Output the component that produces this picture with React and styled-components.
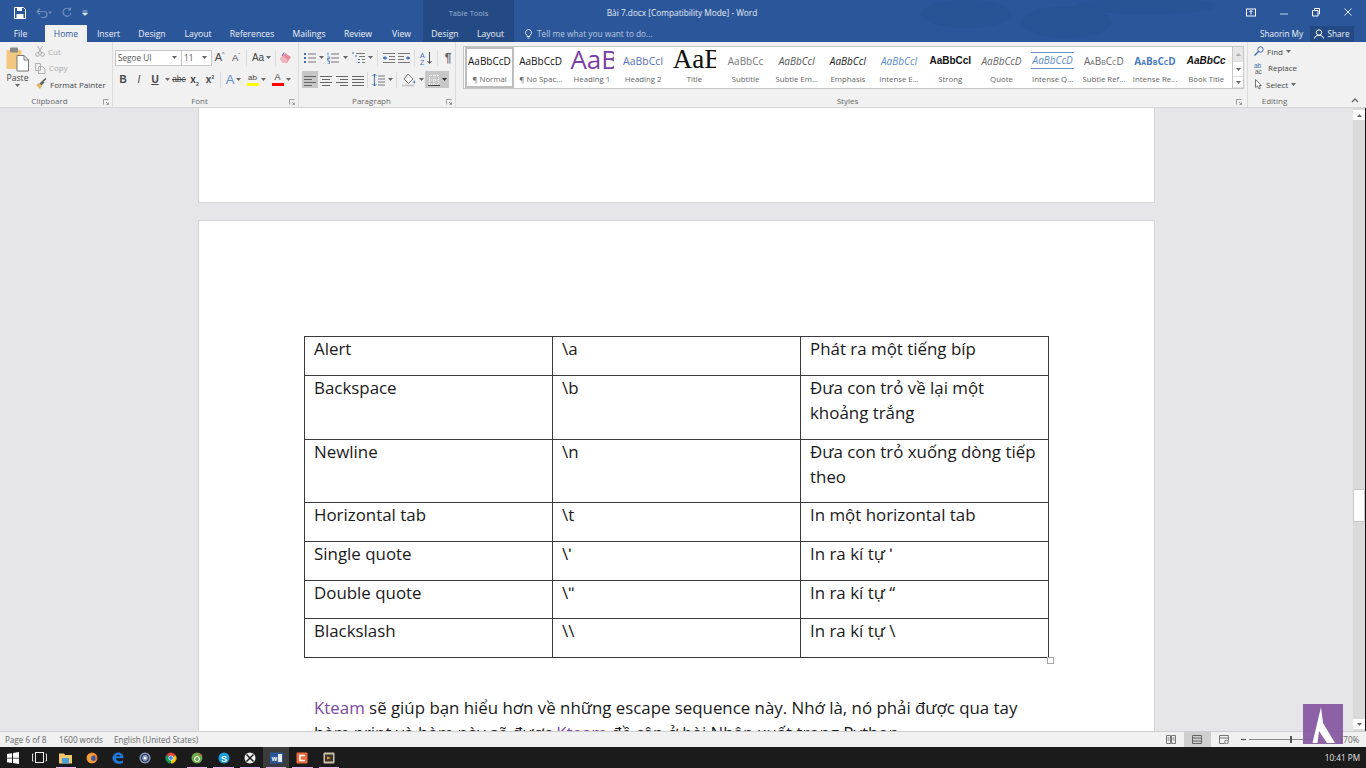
import React from 'react';
import styled, { createGlobalStyle } from 'styled-components';

const GlobalStyle = createGlobalStyle`
  html, body { margin: 0; padding: 0; height: 100%; overflow: hidden; }
  body { font-family: "Open Sans", "Liberation Sans", sans-serif; }
  #root { height: 100%; }
`;

const Screen = styled.div`
  position: relative;
  width: 1366px;
  height: 768px;
  display: flex;
  flex-direction: column;
  overflow: hidden;
  background: #e6e6e8;
`;

/* ---------- title bar and tabs ---------- */

const Header = styled.header`
  position: relative;
  height: 42px;
  background: #2b579a;
  color: #fff;
  flex: none;
`;

const Clouds = styled.svg`
  position: absolute;
  right: 90px;
  top: 0;
  width: 400px;
  height: 42px;
`;

const TitleRow = styled.div`
  position: relative;
  height: 25px;
  display: flex;
  align-items: center;
`;

const Quick = styled.div`
  width: 423px;
  flex: none;
  display: flex;
  align-items: center;
  padding-left: 14px;
  box-sizing: border-box;
  gap: 10px;
`;

const ContextLabel = styled.div`
  width: 91px;
  height: 25px;
  flex: none;
  background: #234a84;
  color: #9fb3d2;
  font-size: 7.5px;
  line-height: 26px;
  text-align: center;
`;

const DocTitle = styled.div`
  width: 336px;
  flex: none;
  font-size: 8.3px;
  text-align: center;
  color: #e6ecf5;
`;

const WindowButtons = styled.div`
  margin-left: auto;
  display: flex;
  align-items: center;
  gap: 24px;
  padding-right: 14px;
`;

const TabRow = styled.div`
  position: relative;
  height: 17px;
  display: flex;
  align-items: stretch;
`;

const Tab = styled.div`
  width: ${(p) => p.$w}px;
  flex: none;
  box-sizing: border-box;
  font-size: 8.6px;
  line-height: 18px;
  text-align: center;
  color: ${(p) => (p.$active ? '#2b579a' : '#eef2f8')};
  background: ${(p) => (p.$active ? '#f1f1f1' : p.$context ? '#234a84' : 'transparent')};
  &:first-child {
    padding-right: 4px;
  }
`;

const TellMe = styled.div`
  display: flex;
  align-items: center;
  gap: 5px;
  margin-left: 11px;
  font-size: 8.3px;
  color: #b9c9e0;
`;

const Account = styled.div`
  margin-left: auto;
  display: flex;
  align-items: center;
  font-size: 8.2px;
  color: #eef2f8;
  padding-right: 12px;
`;

const ShareBtn = styled.div`
  height: 16px;
  width: 44px;
  margin-left: 7px;
  display: flex;
  align-items: center;
  justify-content: center;
  gap: 3px;
  background: #234a84;
`;

/* ---------- ribbon ---------- */

const Ribbon = styled.section`
  position: relative;
  height: 66px;
  flex: none;
  display: flex;
  background: #f1f1f1;
  border-bottom: 1px solid #d6d6d6;
  box-sizing: border-box;
  color: #444;
`;

const Group = styled.div`
  position: relative;
  width: ${(p) => p.$w}px;
  flex: none;
  box-sizing: border-box;
  display: flex;
  flex-direction: column;
  border-right: 1px solid ${(p) => (p.$noline ? 'transparent' : '#dcdcdc')};
`;

const GroupBody = styled.div`
  flex: 1;
  min-height: 0;
`;

const GroupLabel = styled.div`
  height: 13px;
  box-sizing: border-box;
  padding-right: ${(p) => p.$shift || 0}px;
  font-size: 8px;
  line-height: 13px;
  text-align: center;
  color: #666;
`;

const Launcher = styled.svg`
  position: absolute;
  right: ${(p) => p.$right || 3}px;
  bottom: 2px;
  width: 6px;
  height: 6px;
`;

const ClipboardBody = styled(GroupBody)`
  display: flex;
  padding-top: 2px;
`;

const PasteCol = styled.div`
  width: 35px;
  flex: none;
  display: flex;
  flex-direction: column;
  align-items: center;
  padding-top: 2px;
  font-size: 8.6px;
  color: #444;
`;

const ClipList = styled.div`
  display: flex;
  flex-direction: column;
  gap: 0.5px;
  margin-top: -1px;
`;

const ClipItem = styled.div`
  height: 16px;
  display: flex;
  align-items: center;
  gap: 3px;
  font-size: 8px;
  white-space: nowrap;
  color: ${(p) => (p.$off ? '#a8a8a8' : '#444')};
`;

const ToolRows = styled(GroupBody)`
  display: flex;
  flex-direction: column;
  gap: 5px;
  padding: 7px 0 0 ${(p) => p.$left || 0}px;
`;

const ToolRow = styled.div`
  height: 17px;
  display: flex;
  align-items: center;
`;

const Combo = styled.div`
  width: ${(p) => p.$w}px;
  height: 16px;
  box-sizing: border-box;
  flex: none;
  display: flex;
  align-items: center;
  justify-content: space-between;
  padding: 0 4px 0 2px;
  margin-right: -1px;
  background: #fff;
  border: 1px solid #c6c6c6;
  font-size: 8.2px;
  color: #555;
`;

const Tool = styled.div`
  width: ${(p) => p.$w || 16}px;
  height: 17px;
  flex: none;
  display: flex;
  align-items: center;
  justify-content: center;
  gap: 2px;
  background: ${(p) => (p.$on ? '#c6c6c6' : 'transparent')};
  color: #444;
`;

const Letter = styled.span`
  font-family: "Liberation Sans", sans-serif;
  font-size: ${(p) => p.$size || 10}px;
  font-weight: ${(p) => (p.$bold ? 700 : 400)};
  font-style: ${(p) => (p.$italic ? 'italic' : 'normal')};
  text-decoration: ${(p) => p.$deco || 'none'};
  color: ${(p) => p.$color || '#444'};
  line-height: 1;
  white-space: nowrap;
`;

const Sup = styled.sup`
  font-size: 5px;
  line-height: 0;
`;

const Sub = styled.sub`
  font-size: 5px;
  line-height: 0;
`;

const ToolSep = styled.div`
  width: 1px;
  height: 16px;
  flex: none;
  margin: 0 ${(p) => p.$gap || 2}px;
  background: #dcdcdc;
`;

const ColorBar = styled.div`
  display: flex;
  flex-direction: column;
  align-items: center;
  &::after {
    content: '';
    width: 12px;
    height: 3px;
    margin-top: 1px;
    background: ${(p) => p.$color};
  }
`;

const StylesBody = styled(GroupBody)`
  display: flex;
  align-items: flex-start;
  padding: 4px 0 0 7px;
`;

const Gallery = styled.div`
  display: grid;
  grid-template-columns: repeat(15, 51.2px);
  width: 769px;
  height: 43px;
  box-sizing: border-box;
  background: #fff;
  border: 1px solid #c6c6c6;
  border-right: none;
  flex: none;
`;

const StyleItem = styled.div`
  height: 41px;
  box-sizing: border-box;
  display: flex;
  flex-direction: column;
  align-items: center;
  overflow: hidden;
  margin: 0 1px;
  border: ${(p) => (p.$on ? '2px solid #bdbdbd' : '2px solid transparent')};
  padding: 0 1px;
`;

const Preview = styled.div`
  height: 24px;
  width: 100%;
  overflow: hidden;
  white-space: nowrap;
  text-align: center;
  line-height: ${(p) => (p.$size > 20 ? 20 : 24)}px;
  font-family: ${(p) => p.$font || '"Open Sans", sans-serif'};
  font-size: ${(p) => p.$size || 10}px;
  font-weight: ${(p) => (p.$bold ? 700 : 400)};
  font-style: ${(p) => (p.$italic ? 'italic' : 'normal')};
  font-variant: ${(p) => (p.$caps ? 'small-caps' : 'normal')};
  color: ${(p) => p.$color || '#111'};
  box-sizing: border-box;
  ${(p) => p.$rule && 'border-top: 1px solid #6f93c6; border-bottom: 1px solid #6f93c6; height: 17px; line-height: 15px; margin: 3px 0 4px;'}
`;

const StyleName = styled.div`
  font-size: 7.8px;
  line-height: 12px;
  color: #666;
  white-space: nowrap;
`;

const GalleryScroll = styled.div`
  width: 12px;
  height: 43px;
  flex: none;
  display: grid;
  grid-template-rows: 15px 15px 11px;
  border: 1px solid #c6c6c6;
  box-sizing: border-box;
  background: #fff;
`;

const ScrollCell = styled.div`
  display: flex;
  align-items: center;
  justify-content: center;
  background: ${(p) => (p.$off ? '#e6e6e6' : '#fff')};
  border-bottom: 1px solid #e0e0e0;
`;

const EditList = styled(GroupBody)`
  display: flex;
  flex-direction: column;
  gap: 0.5px;
  padding: 1px 0 0 6px;
`;

const Collapse = styled.svg`
  position: absolute;
  right: 7px;
  bottom: 4px;
  width: 8px;
  height: 6px;
`;

/* ---------- document ---------- */

const Workspace = styled.main`
  position: relative;
  flex: 1;
  min-height: 0;
  overflow: hidden;
  background: #e6e6e8;
  padding-left: 198px;
`;

const PrevPage = styled.div`
  width: 957px;
  height: 95px;
  background: #fff;
  border: 1px solid #d4d4d4;
  border-top: none;
  box-sizing: border-box;
`;

const Page = styled.article`
  width: 957px;
  height: 700px;
  margin-top: 17px;
  box-sizing: border-box;
  padding: 115px 0 0 105px;
  background: #fff;
  border: 1px solid #d4d4d4;
`;

const TableWrap = styled.div`
  position: relative;
  width: 745px;
`;

const Table = styled.table`
  width: 745px;
  table-layout: fixed;
  border-collapse: collapse;
  font-size: 16.9px;
  color: #1a1a1a;
`;

const Cell = styled.td`
  height: ${(p) => p.$h}px;
  padding: 0 8px 0 9px;
  box-sizing: border-box;
  vertical-align: top;
  border: 1px solid #3a3a3a;
  line-height: 24.6px;
`;

const ResizeHandle = styled.div`
  position: absolute;
  right: -5px;
  bottom: -6px;
  width: 5px;
  height: 5px;
  background: #fff;
  border: 1px solid #a8a8a8;
`;

const Para = styled.p`
  width: 720px;
  margin: 37px 0 0 10px;
  font-size: 16.85px;
  line-height: 25px;
  color: #1a1a1a;
`;

const Link = styled.span`
  color: #7a4a9e;
`;

const Scrollbar = styled.div`
  position: absolute;
  top: 0;
  bottom: 0;
  right: 0;
  width: 13px;
  background: #dadada;
  border-right: 1px solid #111;
  box-sizing: border-box;
  display: flex;
  flex-direction: column;
  align-items: stretch;
`;

const ScrollArrow = styled.div`
  height: 10px;
  margin: ${(p) => p.$top || 0}px 0 ${(p) => p.$bottom || 0}px;
  flex: none;
  background: #fff;
  display: flex;
  align-items: center;
  justify-content: center;
`;

const ScrollThumb = styled.div`
  height: 33px;
  margin-top: 369px;
  flex: none;
  background: #fff;
  border: 1px solid #c8c8c8;
  box-sizing: border-box;
`;

const Spring = styled.div`
  flex: 1;
`;

/* ---------- status bar ---------- */

const StatusBar = styled.footer`
  height: 16px;
  flex: none;
  display: flex;
  align-items: center;
  box-sizing: border-box;
  background: #f1f1f1;
  border-top: 1px solid #cfcfcf;
  font-size: 8.1px;
  color: #666;
  padding-left: 5px;
`;

const StatusItem = styled.span`
  width: ${(p) => p.$w}px;
  flex: none;
  white-space: nowrap;
  margin-top: -1px;
`;

const StatusRight = styled.div`
  margin-left: auto;
  display: flex;
  align-items: center;
  height: 100%;
  padding-right: 3px;
`;

const ViewBtn = styled.div`
  width: 26.5px;
  height: 100%;
  display: flex;
  align-items: center;
  justify-content: center;
  background: ${(p) => (p.$on ? '#cfcfcf' : 'transparent')};
`;

const ZoomOut = styled.div`
  margin-left: 4px;
`;

const ZoomSlider = styled.div`
  position: relative;
  width: 71px;
  height: 1px;
  margin: 0 4px 0 3px;
  background: #8a8a8a;
`;

const ZoomThumb = styled.div`
  position: absolute;
  left: 41px;
  top: -3px;
  width: 2px;
  height: 7px;
  background: #555;
`;

const ZoomPct = styled.span`
  width: 28px;
  margin-left: 6px;
  text-align: center;
  margin-top: -1px;
`;

const Watermark = styled.svg`
  position: absolute;
  left: 1303px;
  top: 704px;
  width: 40px;
  height: 40px;
`;

/* ---------- taskbar ---------- */

const Taskbar = styled.nav`
  height: 21px;
  flex: none;
  display: flex;
  align-items: stretch;
  background: #1b1b1b;
`;

const TaskBtn = styled.div`
  position: relative;
  width: 26.3px;
  flex: none;
  display: flex;
  align-items: center;
  justify-content: center;
  background: ${(p) => (p.$active ? '#3c3c3c' : 'transparent')};
  &::after {
    content: '';
    display: ${(p) => (p.$running ? 'block' : 'none')};
    position: absolute;
    left: 3px;
    right: 3px;
    bottom: 0;
    height: 1.5px;
    background: #eab2f0;
  }
`;

const Clock = styled.div`
  margin-left: auto;
  padding-right: 6px;
  font-size: 8.2px;
  line-height: 21px;
  color: #e4e4e4;
`;

/* ---------- icons ---------- */

const Ic = ({ w = 14, h = 14, vb, children }) => (
  <svg width={w} height={h} viewBox={vb || `0 0 ${w} ${h}`} style={{ display: 'block', flex: 'none' }}>
    {children}
  </svg>
);

const Caret = ({ c = '#666' }) => (
  <Ic w={5} h={3}>
    <path d="M0 0h5L2.5 3z" fill={c} />
  </Ic>
);

const Lines = ({ rows, color = '#666' }) =>
  rows.map(([x1, x2], i) => <path key={i} d={`M${x1} ${2.5 + i * 3}H${x2}`} stroke={color} strokeWidth="1" />);

const Align = ({ rows, color }) => (
  <Ic w={12} h={14}>
    <g transform="translate(0 1)">
      <Lines rows={rows} color={color} />
    </g>
  </Ic>
);

const BulletIcon = () => (
  <Ic w={12} h={12}>
    <g fill="#3f6fb0">
      <rect x="0" y="1" width="2" height="2" />
      <rect x="0" y="5" width="2" height="2" />
      <rect x="0" y="9" width="2" height="2" />
    </g>
    <path d="M4 2h8M4 6h8M4 10h8" stroke="#777" />
  </Ic>
);

const NumberIcon = () => (
  <Ic w={12} h={12}>
    <path d="M1 0.5v3M0.5 5h2v1.5h-2V8h2M0.5 9h2v3h-2" stroke="#3f6fb0" strokeWidth="0.8" fill="none" />
    <path d="M4 2h8M4 6h8M4 10h8" stroke="#777" />
  </Ic>
);

const MultiIcon = () => (
  <Ic w={13} h={12}>
    <path d="M0 1h2M3 4h2M6 7.5h2M6 10.5h2" stroke="#3f6fb0" strokeWidth="1.2" />
    <path d="M4 1.5h9M7 4.5h6M10 7.5h3M10 10.5h3" stroke="#777" />
  </Ic>
);

const IndentIcon = ({ flip }) => (
  <Ic w={12} h={12}>
    <g transform={flip ? 'matrix(-1 0 0 1 12 0)' : undefined}>
      <path d="M0 1.5h12M6 4.5h6M6 7.5h6M0 10.5h12" stroke="#777" />
      <path d="M0 6h4" stroke="#3f6fb0" strokeWidth="1.4" />
      <path d="M0 6l2.5-2.2v4.4z" fill="#3f6fb0" />
    </g>
  </Ic>
);

const SortIcon = () => (
  <Ic w={13} h={14}>
    <text x="0" y="6.5" fontSize="7" fontFamily="Liberation Sans" fill="#3f6fb0">A</text>
    <text x="0" y="13.5" fontSize="7" fontFamily="Liberation Sans" fill="#3f6fb0">Z</text>
    <path d="M9.5 1v11M7.5 10l2 2.5 2-2.5" stroke="#555" fill="none" />
  </Ic>
);

const SpacingIcon = () => (
  <Ic w={13} h={14}>
    <path d="M2.5 1v12M0.5 3l2-2 2 2M0.5 11l2 2 2-2" stroke="#3f6fb0" fill="none" />
    <path d="M6 3h7M6 6h7M6 9h7M6 12h7" stroke="#777" />
  </Ic>
);

const ShadingIcon = () => (
  <Ic w={16} h={14}>
    <path d="M7 1l5 5-4.5 4.5L3 6z" fill="#fff" stroke="#777" />
    <path d="M13 7c1 1.6 1.6 2.2 1 3s-2 .2-1.5-.8z" fill="#3f6fb0" />
    <path d="M1 12.5h12" stroke="#c9c9c9" strokeWidth="2" />
  </Ic>
);

const BordersIcon = () => (
  <Ic w={12} h={12}>
    <path d="M1 1.5h10M1 6h10M1 10.5h10M1.5 1v10M6 1v10M10.5 1v10" stroke="#fff" strokeDasharray="1 1" />
    <path d="M0 11.5h12" stroke="#444" />
  </Ic>
);

const PasteIcon = () => (
  <Ic w={23} h={26}>
    <rect x="0.5" y="4" width="15" height="19" rx="1" fill="#f3c77f" />
    <rect x="4" y="1.5" width="8" height="5" rx="1" fill="#8a8a8a" />
    <path d="M11 9.5h7l4.5 4.5v11H11z" fill="#fff" stroke="#777" />
    <path d="M18 9.5V14h4.5" fill="none" stroke="#777" />
  </Ic>
);

const CutIcon = () => (
  <Ic w={10} h={12}>
    <circle cx="2.5" cy="9.5" r="1.8" fill="none" stroke="#a8a8a8" />
    <circle cx="7.5" cy="9.5" r="1.8" fill="none" stroke="#a8a8a8" />
    <path d="M3.3 8L7.5 1M6.7 8L2.5 1" stroke="#a8a8a8" />
  </Ic>
);

const CopyIcon = () => (
  <Ic w={11} h={12}>
    <path d="M.5 1.5h5v7h-5zM3.5 4.5h4l2.5 2.5v4.5H3.5z" fill="#f1f1f1" stroke="#b0b0b0" />
  </Ic>
);

const PainterIcon = () => (
  <Ic w={12} h={12}>
    <path d="M1 7l4 4 2-3-3-3z" fill="#e6b565" />
    <path d="M4.5 5.5l3-3 2 2-3 3z" fill="#666" />
    <path d="M8 3l3-2.5" stroke="#555" strokeWidth="1.5" />
  </Ic>
);

const EraserIcon = () => (
  <Ic w={13} h={13}>
    <path d="M1 8l5-6 6 4-4 6H4z" fill="#e88b9c" />
    <path d="M5 1.5L3 5" stroke="#3f6fb0" />
    <path d="M4 12l-3-4 3-3 5 4-2 3z" fill="#f3b7c2" />
  </Ic>
);

const Pilcrow = () => <Letter $size={12} $bold $color="#666">¶</Letter>;

const Launch = ({ right }) => (
  <Launcher viewBox="0 0 6 6" $right={right}>
    <path d="M.5 5.5v-5h5M3 3l2.5 2.5M5.5 3.5v2h-2" stroke="#888" fill="none" strokeWidth="0.8" />
  </Launcher>
);

const WinIcon = () => (
  <Ic w={12} h={12}>
    <path d="M0 2l5-.8v4.500H0zM6 1l6-1v5.700H6zM0 6.500h5V11l-5-.8zM6 6.500h6V12l-6-1z" fill="#fff" />
  </Ic>
);

const BadgeIcon = ({ bg, children, round }) => (
  <Ic w={12} h={12}>
    {round ? <circle cx="6" cy="6" r="5.5" fill={bg} /> : <rect x="0.5" y="0.5" width="11" height="11" rx="1" fill={bg} />}
    {children}
  </Ic>
);

const taskIcons = [
  { key: 'start', icon: <WinIcon /> },
  {
    key: 'view',
    icon: (
      <Ic w={15} h={11}>
        <rect x="3.5" y="0.5" width="8" height="10" fill="none" stroke="#eee" />
        <path d="M1.5 2h-1v7h1M13.5 2h1v7h-1" fill="none" stroke="#ddd" />
      </Ic>
    ),
  },
  {
    key: 'explorer',
    running: true,
    icon: (
      <Ic w={13} h={12}>
        <path d="M0 1.5h5L6 3h7v8.500H0z" fill="#f1c96b" />
        <rect x="3" y="6" width="7" height="5.5" fill="#48a3dd" />
      </Ic>
    ),
  },
  {
    key: 'firefox',
    icon: (
      <BadgeIcon round bg="#e9762b">
        <circle cx="6.5" cy="6.5" r="3" fill="#3b5aa8" />
        <path d="M1 5c1.5-4 7-5 9-1.500C8 2 5.500 3 5 6.500 5 9 8 10 10.500 8 9 11.500 4 12.500 1.500 8.500z" fill="#f2a23a" />
      </BadgeIcon>
    ),
  },
  {
    key: 'edge',
    icon: (
      <Ic w={12} h={12}>
        <path d="M.5 6C1 2 4 .5 6.500 .5c3 0 5 2.200 5 5.700H4c0 3 4 3.800 7 2V11C7 13 .5 11.500 .5 6zM4 4.300h4.500C8.300 2.600 4.500 2.500 4 4.300z" fill="#1f78d8" />
      </Ic>
    ),
  },
  {
    key: 'vpn',
    icon: (
      <BadgeIcon round bg="#8fa0bd">
        <circle cx="6" cy="6" r="3.5" fill="none" stroke="#24365e" strokeWidth="1.2" />
        <circle cx="6" cy="6" r="1.2" fill="#fff" />
      </BadgeIcon>
    ),
  },
  {
    key: 'chrome',
    icon: (
      <Ic w={12} h={12}>
        <path d="M6 6L1.200 3.200A5.500 5.500 0 0 1 10.800 3.200z" fill="#db4437" />
        <path d="M6 6L10.800 3.200A5.500 5.500 0 0 1 6 11.500z" fill="#f4c20d" />
        <path d="M6 6V11.500A5.500 5.500 0 0 1 1.200 3.200z" fill="#0f9d58" />
        <circle cx="6" cy="6" r="2.5" fill="#fff" />
        <circle cx="6" cy="6" r="1.9" fill="#4285f4" />
      </Ic>
    ),
  },
  {
    key: 'cam',
    running: true,
    icon: (
      <BadgeIcon round bg="#6da84a">
        <circle cx="6" cy="7" r="2.5" fill="none" stroke="#fff" />
        <path d="M8 1l3 2-2 1z" fill="#e2584c" />
      </BadgeIcon>
    ),
  },
  {
    key: 'skype',
    running: true,
    icon: (
      <BadgeIcon round bg="#1c9fe0">
        <text x="6" y="9.5" fontSize="9" fontWeight="700" textAnchor="middle" fontFamily="Liberation Sans" fill="#fff">S</text>
      </BadgeIcon>
    ),
  },
  {
    key: 'xbox',
    running: true,
    icon: (
      <BadgeIcon round bg="#f2f2f2">
        <path d="M2.5 2.5l7 7M9.500 2.500l-7 7" stroke="#1b1b1b" strokeWidth="1.5" />
      </BadgeIcon>
    ),
  },
  {
    key: 'word',
    running: true,
    active: true,
    icon: (
      <Ic w={13} h={12}>
        <rect x="0" y="0.5" width="13" height="11" fill="#2b579a" />
        <rect x="8" y="2" width="4" height="8" fill="#e4e9f2" />
        <text x="4.5" y="8.5" fontSize="7" fontWeight="700" textAnchor="middle" fontFamily="Liberation Sans" fill="#fff">w</text>
      </Ic>
    ),
  },
  {
    key: 'camtasia',
    running: true,
    icon: (
      <BadgeIcon bg="#ec6a3c">
        <path d="M9 3.500H4v5h5" fill="none" stroke="#fff" strokeWidth="1.6" />
      </BadgeIcon>
    ),
  },
  {
    key: 'video',
    running: true,
    icon: (
      <BadgeIcon bg="#c9c2a8">
        <rect x="2" y="2.5" width="8" height="7" fill="#3a3226" />
        <path d="M4 4.500l4 1.500-4 1.500z" fill="#e29a2e" />
      </BadgeIcon>
    ),
  },
];

/* ---------- data ---------- */

const tabs = [
  ['File', 45],
  ['Home', 42, 'active'],
  ['Insert', 43],
  ['Design', 44],
  ['Layout', 48],
  ['References', 60],
  ['Mailings', 54],
  ['Review', 44],
  ['View', 43],
  ['Design', 44, 'context'],
  ['Layout', 47, 'context'],
];

const galleryStyles = [
  { name: '¶ Normal', sample: 'AaBbCcDc', on: true, size: 10 },
  { name: '¶ No Spac...', sample: 'AaBbCcDc', size: 10 },
  { name: 'Heading 1', sample: 'AaBbCc', size: 26, color: '#7b3fa6' },
  { name: 'Heading 2', sample: 'AaBbCcI', size: 10.5, color: '#5a6fb8' },
  { name: 'Title', sample: 'AaBbCc', size: 27, font: '"Liberation Serif", serif' },
  { name: 'Subtitle', sample: 'AaBbCc', size: 10, color: '#777' },
  { name: 'Subtle Em...', sample: 'AaBbCcI', size: 10, italic: true, color: '#555' },
  { name: 'Emphasis', sample: 'AaBbCcI', size: 10, italic: true, color: '#222' },
  { name: 'Intense E...', sample: 'AaBbCcI', size: 10, italic: true, color: '#5b8bd0' },
  { name: 'Strong', sample: 'AaBbCcI', size: 10, bold: true, font: '"Liberation Sans", sans-serif' },
  { name: 'Quote', sample: 'AaBbCcD', size: 10, italic: true, color: '#666' },
  { name: 'Intense Q...', sample: 'AaBbCcD', size: 10, italic: true, color: '#5b8bd0', rule: true },
  { name: 'Subtle Ref...', sample: 'AaBbCcD', size: 10, caps: true, color: '#666' },
  { name: 'Intense Re...', sample: 'AaBbCcD', size: 10, caps: true, bold: true, color: '#4a7cc0' },
  { name: 'Book Title', sample: 'AaBbCc', size: 10, bold: true, italic: true, font: '"Liberation Sans", sans-serif' },
];

const rows = [
  { h: 39, cells: ['Alert', '\\a', 'Phát ra một tiếng bíp'] },
  { h: 64, cells: ['Backspace', '\\b', 'Đưa con trỏ về lại một khoảng trắng'] },
  { h: 63, cells: ['Newline', '\\n', 'Đưa con trỏ xuống dòng tiếp theo'] },
  { h: 39, cells: ['Horizontal tab', '\\t', 'In một horizontal tab'] },
  { h: 39, cells: ['Single quote', '\\ʹ', 'In ra kí tự ʹ'] },
  { h: 38, cells: ['Double quote', '\\ʺ', 'In ra kí tự “'] },
  { h: 39, cells: ['Blackslash', '\\\\', 'In ra kí tự \\'] },
];

const App = () => {
  return (
    <Screen>
      <GlobalStyle />
      <Header>
        <Clouds viewBox="0 0 400 42">
          <g fill="#285395">
            <ellipse cx="90" cy="14" rx="45" ry="14" />
            <ellipse cx="190" cy="22" rx="45" ry="16" />
            <ellipse cx="270" cy="6" rx="70" ry="8" />
          </g>
        </Clouds>
        <TitleRow>
          <Quick>
            <Ic w={12} h={12}>
              <path d="M.5 .5h9l2 2v9H.5z" fill="none" stroke="#fff" />
              <rect x="3" y="1" width="5" height="3" fill="#fff" />
              <rect x="2.5" y="7" width="7" height="4" fill="#fff" />
            </Ic>
            <Ic w={16} h={11}>
              <path d="M1 4.500h7a3 3 0 0 1 0 6H5M1 4.500l3-3M1 4.500l3 3" fill="none" stroke="#6f8dbb" strokeWidth="1.2" />
              <path d="M12 4.500h4L14 7z" fill="#6f8dbb" />
            </Ic>
            <Ic w={10} h={11}>
              <path d="M8 2.500A4 4 0 1 0 9 6M8.500 .5V3H6" fill="none" stroke="#6f8dbb" strokeWidth="1.2" />
            </Ic>
            <Ic w={6} h={6}>
              <path d="M.5 1h5M.5 3h5L3 5.500z" stroke="#e3e9f3" fill="#e3e9f3" strokeWidth="0.7" />
            </Ic>
          </Quick>
          <ContextLabel>Table Tools</ContextLabel>
          <DocTitle>Bài 7.docx [Compatibility Mode] - Word</DocTitle>
          <WindowButtons>
            <Ic w={10} h={9}>
              <rect x="0.5" y="1" width="9" height="7" fill="none" stroke="#fff" />
              <path d="M5 6.500v-4M3.500 4L5 2.500 6.500 4" stroke="#fff" fill="none" />
            </Ic>
            <Ic w={8} h={9}>
              <path d="M0 6h8" stroke="#c5d2e6" />
            </Ic>
            <Ic w={8} h={9}>
              <path d="M.5 2.500H6V8H.5zM2.500 2V.5h5V6h-1" fill="none" stroke="#fff" />
            </Ic>
            <Ic w={8} h={9}>
              <path d="M.5 .5l7 7M7.500 .5l-7 7" stroke="#dfe7f2" />
            </Ic>
          </WindowButtons>
        </TitleRow>
        <TabRow>
          {tabs.map(([label, w, kind], i) => (
            <Tab key={i} $w={w} $active={kind === 'active'} $context={kind === 'context'}>
              {label}
            </Tab>
          ))}
          <TellMe>
            <Ic w={7} h={10}>
              <path d="M3.500 .5A3 3 0 0 1 5 6.100V7.500H2V6.100A3 3 0 0 1 3.500 .5zM2.500 9h2" fill="none" stroke="#d5deec" />
            </Ic>
            Tell me what you want to do...
          </TellMe>
          <Account>
            Shaorin My
            <ShareBtn>
              <Ic w={10} h={10}>
                <circle cx="5" cy="3.5" r="2.7" fill="none" stroke="#fff" />
                <path d="M.5 9.500C1 7 2.500 6.500 5 6.500s4 .5 4.500 3" fill="none" stroke="#fff" />
              </Ic>
              Share
            </ShareBtn>
          </Account>
        </TabRow>
      </Header>

      <Ribbon>
        <Group $w={113}>
          <ClipboardBody>
            <PasteCol>
              <PasteIcon />
              Paste
              <Caret />
            </PasteCol>
            <ClipList>
              <ClipItem $off><CutIcon /> Cut</ClipItem>
              <ClipItem $off><CopyIcon /> Copy</ClipItem>
              <ClipItem><PainterIcon /> Format Painter</ClipItem>
            </ClipList>
          </ClipboardBody>
          <GroupLabel $shift={13}>Clipboard</GroupLabel>
          <Launch />
        </Group>

        <Group $w={186}>
          <ToolRows $left={2}>
            <ToolRow>
              <Combo $w={67}>Segoe UI <Caret /></Combo>
              <Combo $w={31}>11 <Caret /></Combo>
              <Tool $w={17}><Letter $size={11}>A<Sup>^</Sup></Letter></Tool>
              <Tool $w={16}><Letter $size={9.5}>A<Sup>ˇ</Sup></Letter></Tool>
              <ToolSep />
              <Tool $w={25}><Letter $size={10}>Aa</Letter><Caret /></Tool>
              <ToolSep $gap={1} />
              <Tool $w={16}><EraserIcon /></Tool>
            </ToolRow>
            <ToolRow>
              <Tool><Letter $bold>B</Letter></Tool>
              <Tool><Letter $italic>I</Letter></Tool>
              <Tool><Letter $deco="underline" $bold>U</Letter></Tool>
              <Tool $w={8}><Caret /></Tool>
              <Tool $w={16}><Letter $size={8.5} $deco="line-through">abc</Letter></Tool>
              <Tool $w={15}><Letter $bold>x<Sub>2</Sub></Letter></Tool>
              <Tool $w={16}><Letter $bold>x<Sup>2</Sup></Letter></Tool>
              <ToolSep />
              <Tool $w={21}>
                <Letter $size={13} $color="#5d8fd0">A</Letter>
                <Caret />
              </Tool>
              <Tool $w={24}>
                <ColorBar $color="#ffff00"><Letter $size={8}>ab</Letter></ColorBar>
                <Caret />
              </Tool>
              <Tool $w={26}>
                <ColorBar $color="#f00"><Letter $size={9}>A</Letter></ColorBar>
                <Caret />
              </Tool>
            </ToolRow>
          </ToolRows>
          <GroupLabel $shift={12}>Font</GroupLabel>
          <Launch />
        </Group>

        <Group $w={157}>
          <ToolRows $left={3}>
            <ToolRow>
              <Tool $w={16}><BulletIcon /></Tool>
              <Tool $w={7}><Caret /></Tool>
              <Tool $w={16}><NumberIcon /></Tool>
              <Tool $w={9}><Caret /></Tool>
              <Tool $w={17}><MultiIcon /></Tool>
              <Tool $w={7}><Caret /></Tool>
              <ToolSep $gap={3} />
              <Tool $w={15}><IndentIcon /></Tool>
              <Tool $w={15}><IndentIcon flip /></Tool>
              <ToolSep $gap={3} />
              <Tool $w={17}><SortIcon /></Tool>
              <ToolSep />
              <Tool $w={16}><Pilcrow /></Tool>
            </ToolRow>
            <ToolRow>
              <Tool $on><Align rows={[[0, 12], [0, 8], [0, 12], [0, 8]]} /></Tool>
              <Tool><Align rows={[[0, 12], [2, 10], [0, 12], [2, 10]]} /></Tool>
              <Tool><Align rows={[[0, 12], [4, 12], [0, 12], [4, 12]]} /></Tool>
              <Tool><Align rows={[[0, 12], [0, 12], [0, 12], [0, 12]]} /></Tool>
              <ToolSep $gap={1} />
              <Tool $w={18}><SpacingIcon /></Tool>
              <Tool $w={7}><Caret /></Tool>
              <ToolSep />
              <Tool $w={19}><ShadingIcon /></Tool>
              <Tool $w={7}><Caret /></Tool>
              <Tool $w={24} $on><BordersIcon /><Caret c="#333" /></Tool>
            </ToolRow>
          </ToolRows>
          <GroupLabel $shift={11}>Paragraph</GroupLabel>
          <Launch />
        </Group>

        <Group $w={792}>
          <StylesBody>
            <Gallery>
              {galleryStyles.map((s) => (
                <StyleItem key={s.name} $on={s.on}>
                  <Preview
                    $size={s.size}
                    $color={s.color}
                    $font={s.font}
                    $bold={s.bold}
                    $italic={s.italic}
                    $caps={s.caps}
                    $rule={s.rule}
                  >
                    {s.sample}
                  </Preview>
                  <StyleName>{s.name}</StyleName>
                </StyleItem>
              ))}
            </Gallery>
            <GalleryScroll>
              <ScrollCell $off>
                <Ic w={5} h={3}><path d="M0 3h5L2.5 0z" fill="#aaa" /></Ic>
              </ScrollCell>
              <ScrollCell><Caret /></ScrollCell>
              <ScrollCell><Caret /></ScrollCell>
            </GalleryScroll>
          </StylesBody>
          <GroupLabel $shift={8}>Styles</GroupLabel>
          <Launch right={5} />
        </Group>

        <Group $w={56} $noline>
          <EditList>
            <ClipItem>
              <Ic w={10} h={11}>
                <circle cx="6.5" cy="3.5" r="2.7" fill="none" stroke="#3f6fb0" />
                <path d="M4.500 5.500l-4 4" stroke="#3f6fb0" strokeWidth="1.4" />
              </Ic>
              Find <Caret />
            </ClipItem>
            <ClipItem>
              <Ic w={11} h={12}>
                <text x="0" y="5.5" fontSize="6.5" fontFamily="Liberation Sans" fill="#3f6fb0">ab</text>
                <text x="1" y="11.5" fontSize="6.5" fontFamily="Liberation Sans" fill="#555">ac</text>
              </Ic>
              Replace
            </ClipItem>
            <ClipItem>
              <Ic w={9} h={11}>
                <path d="M1.500 .5v8l2-1.500 1.500 3 1.500-.8L5 6.500h2.500z" fill="#fff" stroke="#777" />
              </Ic>
              Select <Caret />
            </ClipItem>
          </EditList>
          <GroupLabel $shift={2}>Editing</GroupLabel>
        </Group>
        <Collapse viewBox="0 0 8 6">
          <path d="M1 5l3-3 3 3" fill="none" stroke="#666" strokeWidth="1.3" />
        </Collapse>
      </Ribbon>

      <Workspace>
        <PrevPage />
        <Page>
          <TableWrap>
            <Table>
              <tbody>
                {rows.map((row) => (
                  <tr key={row.cells[0]}>
                    {row.cells.map((text) => (
                      <Cell key={text} $h={row.h}>{text}</Cell>
                    ))}
                  </tr>
                ))}
              </tbody>
            </Table>
            <ResizeHandle />
          </TableWrap>
          <Para>
            <Link>Kteam</Link> sẽ giúp bạn hiểu hơn về những escape sequence này. Nhớ là, nó phải được qua tay
            hàm print và hàm này sẽ được <Link>Kteam</Link> đề cập ở bài Nhập xuất trong Python.
          </Para>
        </Page>
        <Scrollbar>
          <ScrollArrow $top={2}>
            <Ic w={5} h={3}><path d="M0 3h5L2.5 0z" fill="#666" /></Ic>
          </ScrollArrow>
          <ScrollThumb />
          <Spring />
          <ScrollArrow $bottom={2}>
            <Caret />
          </ScrollArrow>
        </Scrollbar>
      </Workspace>

      <StatusBar>
        <StatusItem $w={54}>Page 6 of 8</StatusItem>
        <StatusItem $w={55}>1600 words</StatusItem>
        <StatusItem $w={100}>English (United States)</StatusItem>
        <StatusRight>
          <ViewBtn>
            <Ic w={10} h={9}>
              <path d="M.5 .5h4v8h-4zM5.500 .5h4v8h-4zM1.500 3h2M1.500 5h2M6.500 3h2M6.500 5h2" fill="none" stroke="#777" />
            </Ic>
          </ViewBtn>
          <ViewBtn $on>
            <Ic w={10} h={9}>
              <path d="M.5 .5h9v8h-9zM.5 3h9M.5 6h9" fill="none" stroke="#666" />
            </Ic>
          </ViewBtn>
          <ViewBtn>
            <Ic w={10} h={9}>
              <path d="M.5 .5h9v5M.5 .5v8h5M.5 3h9" fill="none" stroke="#777" />
              <circle cx="7.5" cy="7" r="1.8" fill="none" stroke="#777" />
            </Ic>
          </ViewBtn>
          <ZoomOut>
            <Ic w={5} h={3}><path d="M0 1.500h5" stroke="#555" strokeWidth="1.2" /></Ic>
          </ZoomOut>
          <ZoomSlider><ZoomThumb /></ZoomSlider>
          <Ic w={5} h={5}><path d="M0 2.500h5M2.500 0v5" stroke="#555" /></Ic>
          <ZoomPct>170%</ZoomPct>
        </StatusRight>
      </StatusBar>

      <Taskbar>
        {taskIcons.map((t) => (
          <TaskBtn key={t.key} $running={t.running} $active={t.active}>
            {t.icon}
          </TaskBtn>
        ))}
        <Clock>10:41 PM</Clock>
      </Taskbar>

      <Watermark viewBox="0 0 40 40">
        <rect width="40" height="40" fill="#84569f" opacity="0.92" />
        <path d="M18 3L20 19 32 39H24L16 27 14.500 39H9.500z" fill="#fff" />
      </Watermark>
    </Screen>
  );
};

export default App;
